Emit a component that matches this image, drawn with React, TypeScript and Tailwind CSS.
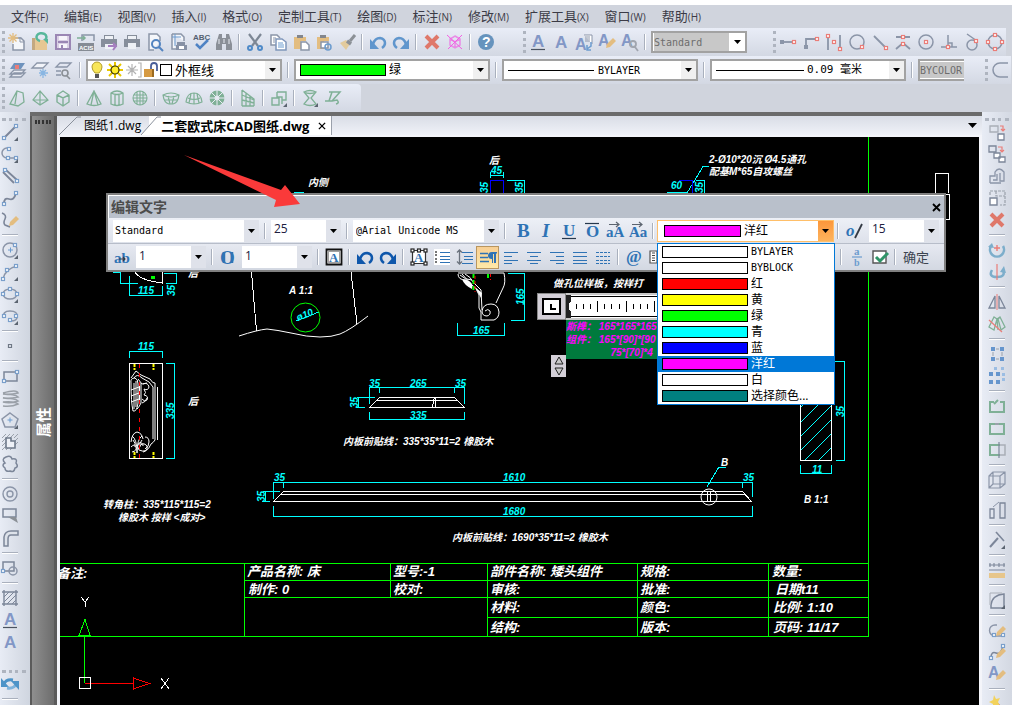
import React, { useState } from 'react';

const GREY = '#8b95a8';
const BLUE = '#6c9ccf';
const RED = '#ea7d78';
const GREEN = '#7fb096';
const SAND = '#e3bd80';
const STEEL = '#2f73b5';

// Icons are small lists of strokes, fills and letters on an 18x18 grid
const line = (d: string, color = GREY, width = 1.5, fill = 'none') => (
  <path key={d + color} d={d} stroke={color} strokeWidth={width} fill={fill} />
);
const fill = (d: string, color = GREY) => <path key={d + color} d={d} fill={color} stroke="none" />;
const letter = (s: string, x: number, y: number, size: number, color = '#8297c6', family = 'Liberation Sans', italic = false) => (
  <text key={s + x} x={x} y={y} fontSize={size} fontWeight="bold" fontStyle={italic ? 'italic' : 'normal'} fontFamily={family} fill={color} stroke="none">
    {s}
  </text>
);
const node = (x: number, y: number, color = '#7a9fcb') => (
  <rect key={`${x}-${y}`} x={x - 1.5} y={y - 1.5} width="3" height="3" stroke={color} strokeWidth="1.2" fill="#fff" />
);
const corner = fill('M17 14v4h-4z', '#5b6470');
const pencil = (color = SAND) => fill('M8 15l1-4 6-6 3 3-6 6z', color);

const icons: Record<string, React.ReactNode[]> = {
  new: [line('M6 5h7l3 3v9H5v-6', GREY, 1.5, '#f4f6fa'), line('M12 4v5h4', GREY, 1), line('M5 0v10M0 5h10M1.500 1.500l7 7M8.500 1.500l-7 7', SAND, 1.3)],
  open: [fill('M1 5h5l2 2h8v10H1z', '#e6c793'), fill('M1 5h3v12H1z', '#c3a880'), line('M9 8a5 4 0 1 1 5-1', '#57b79b', 2.500), fill('M12 6h5v5z', '#57b79b')],
  save: [line('M2 2h14v14H2z', '#9a86b4', 2, '#d9cfe4'), fill('M5 3h8v4H5zM5 11h8v4H5z', '#f6f4fa'), line('M4 9h10', '#9a86b4', 2), fill('M7 12h2v3H7z', '#9a86b4')],
  acis: [line('M5 8V2h12v6', GREY, 1.5), line('M0 5h8M6 3l2 2-2 2', GREEN, 1.5), fill('M1 10h16v8H1z', '#858b94'), letter('ACIS', 2, 17, 6, '#fff')],
  printSend: [fill('M4 2h10v4h3v8H1V6h3z', '#868e9b'), fill('M5 3h8v3H5z', '#eef1f6'), fill('M5 11h8v5H5z', '#eef1f6'), line('M8 13h7M13 10l3 3-3 4', '#a57fc0', 2)],
  print: [fill('M4 2h10v4h3v8H1V6h3z', '#868e9b'), fill('M5 3h8v3H5z', '#eef1f6'), fill('M5 10h8v6H5z', '#eef1f6')],
  preview: [line('M14 8V4l-3-3H3v16h5', GREY, 1.5, '#f4f6fa'), line('M14 11a4 4 0 1 1-8 0 4 4 0 1 1 8 0M13 14l4 4', '#5384c0', 2)],
  publish: [line('M3 1h9l3 3v4M3 1v15h4', GREY, 1.5, '#f4f6fa'), line('M3 4h9M6 1v12', BLUE, 1), fill('M8 9h8v3h2v5H7v-5h1z', '#8791a5'), fill('M10 13h5v3h-5z', '#fff')],
  spell: [letter('ABC', 1, 7, 8, '#545f70'), line('M4 11l4 4 8-8', '#4f83c4', 2.500)],
  find: [fill('M4 1h3v4h4V1h3l3 10v6h-6v-6H7v6H1v-6z', '#8a8f97'), line('M9 6v4M4 6v5M14 6v5', '#e8ebf2', 1)],
  cut: [line('M3 1l9 12M15 1L6 13', '#7d8795', 2.200), line('M6 15a2 2 0 1 1-4 0 2 2 0 1 1 4 0M16 15a2 2 0 1 1-4 0 2 2 0 1 1 4 0', '#4f8ac8', 2)],
  copy: [line('M8 12H2V2h6l3 3', GREY, 1.5, '#fff'), line('M7 6h6l4 3v8H7z', '#7f96bb', 1.5, '#fff'), line('M9 10h5M9 12h6M9 14h6', BLUE, 1), line('M4 5h3M4 7h2M4 9h2', GREY, 1)],
  paste: [fill('M2 4h12v4H9v8H2z', SAND), fill('M5 2h6v3H5z', '#83868c'), line('M9 9h5l3 3v5H9z', GREY, 1.5, '#fff')],
  pasteSpec: [fill('M2 4h12v4H9v8H2z', SAND), fill('M5 2h6v3H5z', '#83868c'), line('M6 9h7v6H6z', GREY, 1.5, '#fff'), line('M16 14a3 3 0 1 1-6 0 3 3 0 1 1 6 0', BLUE, 1.5)],
  brush: [fill('M2 10l6-3 4 4-4 6z', '#e3cb9d'), line('M9 8l4 3', '#8b9096', 3.500), line('M12 8l5-6', '#8b9096', 3)],
  undo: [line('M4 11q2-6 7-6 5 1 5 5 0 3-3 5', '#6096cd', 2.500), fill('M1 6v10h9z', '#6096cd')],
  redo: [line('M14 11q-2-6-7-6-5 1-5 5 0 3 3 5', '#6096cd', 2.500), fill('M17 6v10H8z', '#6096cd')],
  erase: [line('M3 3l12 12M15 3L3 15', '#df786a', 4)],
  purge: [line('M9 3l5 3v6l-5 3-5-3V6zM4 6l5 3 5-3M9 9v6', '#e98be6', 1.5), line('M1 2l15 14M16 2L2 16', '#f45fe4', 1)],
  help: [fill('M17 9a8 8 0 1 1-16 0 8 8 0 1 1 16 0', '#6693bd'), letter('?', 5, 14, 14, '#fff')],
  textU: [letter('A', 3, 14, 17), line('M2 16.500h14', '#4b5360', 1.2)],
  text: [letter('A', 3, 15, 17)],
  textJust: [letter('A', 0, 17, 16), line('M9 2h8v9', GREY, 1, '#fff'), line('M10 4h5M10 6h5M10 8h5', GREY, 1), line('M16 9v4l-4 3M12 12v5h4', BLUE, 1.5)],
  textEdit: [letter('A', 0, 13, 16), pencil()],
  textFind: [letter('A', 0, 13, 16), line('M15 11a3 3 0 1 1-6 0 3 3 0 1 1 6 0M14 14l3 4', '#a0a5ae', 1.8)],
  snapNear: [line('M3 9h12', GREY, 1.8), node(15, 9, RED), fill('M1 7h4v4H1z')],
  snapFrom: [line('M4 14V6h10', GREY, 1.8), node(15, 6, RED), fill('M2 12h4v4H2z')],
  snapMid: [line('M3 2v15M15 2v15', GREY, 1.8), node(3, 3, RED), node(15, 16, RED), node(9, 9, RED)],
  snapQuad: [line('M16 9a7 7 0 1 1-14 0 7 7 0 1 1 14 0', GREY, 1.5), node(14, 14, RED)],
  snapEnd: [line('M3 3l11 11', GREY, 1.8), node(15, 15, RED)],
  snapInt: [line('M2 4h14M2 16l7-6 7 6', GREY, 1.8), node(9, 4, RED), node(9, 11, RED)],
  snapCen: [line('M16 9a7 7 0 1 1-14 0 7 7 0 1 1 14 0', GREY, 1.5), node(9, 9, RED)],
  snapPerp: [line('M1 14h16M8 2v12M8 10h4v4', GREY, 1.5), node(8, 14, RED)],
  snapTan: [line('M4 1l10 7M14 12a5 5 0 1 1-10 0 5 5 0 1 1 10 0', GREY, 1.5), node(13, 8, RED)],
  snapPoly: [line('M16 9a7 7 0 1 1-14 0 7 7 0 1 1 14 0', GREY, 1.5), node(9, 2, RED), node(16, 9, RED), node(9, 16, RED), node(2, 9, RED)],
  arcHalf: [line('M17 2H9a7 7 0 0 0 0 14h8', GREY, 1.5)],
  layers: [line('M6 9h11l-4 4H2zM6 12h11l-4 4H2z', GREY, 1.3, '#e8ebf3'), fill('M6 2h11l-4 6H2z', '#6f93bd'), fill('M7 4h4v4H7z', RED)],
  layerFrz: [line('M6 2h11l-5 5H1z', GREY, 1.3, '#f2f4f9'), line('M12 8v9M8 12h9M9 9l6 6M15 9l-6 6', '#89b6e2', 1.3)],
  layerFind: [line('M6 2h11l-4 4H2zM2 10h5M2 14h5', GREY, 1.3), line('M14 12a3 3 0 1 1-6 0 3 3 0 1 1 6 0M13 15l3 3', '#8b9096', 1.6)],
  wedge: [line('M2 15L9 2l6 2 1 9-6 4zM9 2l-2 13', GREEN, 1.3)],
  pyramid: [line('M9 2L2 11l7 5 8-5zM9 2v14M2 11h15', GREEN, 1.2)],
  cube: [line('M9 2l6 4v7l-6 4-6-4V6zM3 6l6 3 6-3M9 9v8', GREEN, 1.4)],
  cone: [line('M9 2L2 15q7 3 14 0zM9 2L6 16M9 2l4 14', GREEN, 1.3)],
  cylinder: [line('M3 4q6-4 12 0v11q-6 3-12 0zM3 4q6 3 12 0M7 5v12M11 5v12', GREEN, 1.3)],
  sphere: [line('M16 9a7 7 0 1 1-14 0 7 7 0 1 1 14 0M9 2v14M2 9h14M3 6h12M3 12h12M6 3v12M12 3v12', GREEN, 1.1)],
  dish: [line('M1 6q8-4 16 0-1 8-6 9H7Q2 14 1 6zM1 6q8 4 16 0M3 11h12M6 7l2 8M12 7l-2 8', GREEN, 1.2)],
  dome: [line('M1 13Q2 4 9 4t8 9q-8 4-16 0zM3 9q6 3 12 0M9 4v11M6 5L4 14M12 5l2 9', GREEN, 1.2)],
  torus: [line('M14 9A5 5 0 1 1 4 9a5 5 0 1 1 10 0', GREEN, 5), line('M9 1v16M1 9h16M3 3l12 12M15 3L3 15', '#e8ebf3', 1)],
  mesh: [line('M3 1v16M3 1l4 3v13M7 4l4 3v10M11 7l4 3v7M3 6l12 5M3 11l12 3M3 17h12', GREEN, 1.3)],
  extrude: [line('M2 9h7v7H2zM7 3h9v8h-4M7 3v5h5v7', GREEN, 1.4), corner],
  revolve: [line('M3 3q6-3 12 0l-5 6 5 6q-6 3-12 0l5-6zM3 3q6 3 12 0', GREEN, 1.3), corner],
  sweep: [line('M5 3h11L8 12H1M8 3L5 12M8 12l5-1q3 3-1 4', GREEN, 1.5)],
  line: [line('M3 15L15 3', '#7c8699', 2), node(3, 15), node(15, 3), corner],
  polyline: [line('M8 3H6a5 5 0 0 0 0 10h9', GREY, 1.5), node(8, 4), node(7, 13), node(15, 13), corner],
  mline: [line('M5 3l11 10M2 5l11 11', '#7c8699', 1.8), node(4, 3), node(16, 14)],
  spline: [line('M3 15q0-7 5-5t7-6', '#7c8699', 1.8), node(3, 15), node(15, 4)],
  sketch: [line('M1 2q5 2 3 6t0 6l5 2', '#7c8699', 1.6), pencil()],
  circle: [line('M16 9A7 7 0 1 1 2 9a7 7 0 1 1 14 0', GREY, 1.5), line('M7 9h5M9.500 6.500v5M12 6l3-3', BLUE, 1), node(14, 4), corner],
  arc: [line('M2 16Q4 6 16 3', GREY, 1.5), node(2, 16), node(6, 7), node(15, 3), corner],
  ellipse: [line('M16 9A7 5 0 1 1 2 9a7 5 0 1 1 14 0', GREY, 1.5), node(2, 9), node(9, 4), node(16, 9), corner],
  ellArc: [line('M3 11Q1 4 9 4t7 6q0 4-6 4', GREY, 1.5), node(3, 9), node(9, 13), node(15, 9), corner],
  point: [line('M7.500 7.500h3v3h-3z', '#6f7885', 1.2)],
  rect: [line('M3 5h13v9H3z', '#7c8699', 1.5), node(3, 14), node(16, 5)],
  helix: [line('M2 4q14-4 15 0Q9 6 2 5q12 0 15 3Q9 10 2 9q12 0 15 3-8 3-15 1 12-1 15 2-6 3-15 2', '#9aa0a8', 1.6)],
  polygon: [line('M9 2l8 6-3 8H4L1 8z', GREY, 1.5), line('M6.500 9h5M9 6.500v5', BLUE, 1), corner],
  region: [line('M1 5l4-4M1 9l8-8M9 5l4-4M13 5l4-4M13 9l4-4M13 13l4-4M9 17l8-8M5 17l4-4M1 17l4-4M1 13l4-4', '#9aa1ab', 1), line('M5 5h5v3h4v7H5z', '#6f7a8b', 1.6, '#eef1f7')],
  cloud: [line('M5 2q5-2 6 2 6-1 4 4 3 4-1 5-1 5-5 3-5 1-5-3Q0 10 4 8 0 4 5 2z', '#7c8699', 1.5)],
  donut: [line('M16 9A7 7 0 1 1 2 9a7 7 0 1 1 14 0M12 9a3 3 0 1 1-6 0 3 3 0 1 1 6 0', GREY, 1.4)],
  wipeout: [line('M2 2h13v8H2z', '#7c8699', 1.5), fill('M7 10h8l2 6z', '#8b9096')],
  wall: [line('M3 17V8q1-6 7-6h7v4h-7q-3 0-3 4v7z', '#7c8699', 1.5, '#dde2ea')],
  shapes: [line('M2 3h11v9H2z', '#7c8699', 1.5), line('M16 12a4 4 0 1 1-8 0 4 4 0 1 1 8 0', GREY, 1.5), node(2, 12)],
  hatch: [line('M3 1v16M15 1v16M1 3h16M1 15h16', '#7c8699', 1.4), line('M3 8l5-5M3 13L13 3M6 15l9-9M11 15l4-4', '#7c8699', 1)],
  refresh: [line('M3 9q2-5 9-4', '#4d94c8', 3), fill('M0 3v9h8z', '#4d94c8'), line('M15 9q-2 5-9 4', '#7db3dc', 3), fill('M18 15V6h-8z', '#4d94c8')],
  copyObj: [line('M2 3h8v6H2z', '#a9aeb7', 1.3), line('M10 11h6v6h-6z', '#7c8699', 1.3, '#fff'), line('M12 3h3v5M13 6l2 2 2-2', RED, 1.2)],
  copyMul: [line('M1 1h7v6H1z', '#7c8699', 1.3), line('M6 8h6v5H6zM11 12h6v5h-6z', '#7c8699', 1.3, '#fff'), line('M10 2h4v5M12 5l2 2 2-2', RED, 1.2)],
  offset: [line('M2 16V9h5V5q4-6 9 0v9h-4V6M2 16h11M5 13h4V7', GREY, 1.3)],
  scale: [<path key="s" d="M2 6V2h15v14h-5M8 2v5h9" stroke="#9aa1ab" strokeWidth="1.200" strokeDasharray="3 1" />, line('M2 9h7v7H2z', '#7c8699', 1.4, '#fff')],
  rotate: [line('M3 5a7 7 0 1 0 12 0', '#7daecb', 2.500), line('M6 7h6M9 4v6', RED, 1.4), fill('M0 6l4-4 2 5z', '#7daecb')],
  rotate3d: [line('M4 7q-4 7 5 7t6-7', '#7daecb', 2.500), line('M9 1v16', RED, 1.2), fill('M12 9l4-6 2 7z', '#7daecb')],
  mirror: [line('M7 3v12H1zM11 3v12h6z', '#7c8699', 1.3), line('M9 1v16', RED, 1)],
  mirror3d: [line('M6 2L1 12l5 3 3-11zM9 4l1 11M12 2l5 10-4 3-3-11zM6 2l3 2 3-2', GREEN, 1.3), line('M1 5l13 12', RED, 1.2)],
  array: [fill('M3 2h4v4H3zM12 2h4v4h-4zM3 12h4v4H3zM12 12h4v4h-4z', '#6595cd'), line('M8 4h3M8 14h3M5 7v4M14 7v4', '#9aa1ab', 1)],
  array3d: [fill('M1 5h4v4H1zM8 5h4v4H8zM1 13h4v4H1zM8 13h4v4H8z', '#6595cd'), fill('M6 0h3v3H6zM13 0h3v3h-3zM14 6h3v3h-3zM14 11h3v3h-3z', '#9bbde3')],
  trim: [line('M6 5H2v10h14V5h-4M6 7l4-4', GREEN, 2)],
  extend: [line('M2 5h14v10H2z', GREEN, 2), line('M7 5h4', '#9aa1ab', 2)],
  breakAt: [line('M12 4H2v10h10', GREEN, 2), line('M12 4h5v10h-5', '#a9aeb7', 1.5), line('M11 1v16', '#7c8699', 1.2)],
  box: [line('M1 5h11v12H1zM5 1h12v12H5zM1 5l4-4M12 5l5-4M12 17l5-4M1 17l4-4', GREY, 1.2)],
  lengthen: [line('M2 8h4v9H2zM12 2h5v15h-5z', '#7c8699', 1.3), line('M5 6l6-5', GREY, 1)],
  explode: [line('M2 16L10 7', '#7c8699', 2), line('M8 1l8 9', '#7c8699', 1.6), corner],
  measure: [line('M1 4h16M2 2v4M6 2v4M11 2v4M16 2v4M1 9h16', '#7c8699', 1.1), fill('M1 12h16v5H1z', '#e7c68b')],
  fillet: [line('M3 17V14Q4 4 16 3v14z', '#7c8699', 1.5), line('M2 2h12M2 2v12', '#a9aeb7', 1), corner],
  editPl: [line('M9 4H7a5 5 0 0 0 0 11h9', GREY, 1.4), node(6, 14), node(15, 14), pencil(SAND)],
  editSpl: [line('M3 15q0-7 5-5t7-7', '#7c8699', 1.5), node(3, 15), node(15, 3), pencil(SAND)],
  wand: [line('M7 7l9 9', '#c9787f', 3), fill('M6 0l2 4 4-1-2 4 2 4-4-1-3 3V9L1 7l4-2z', '#f2d25c')],
  bold: [letter('B', 3, 15, 19, STEEL, 'Liberation Serif')],
  italic: [letter('I', 5, 15, 19, STEEL, 'Liberation Serif', true)],
  underline: [letter('U', 3, 14, 17, STEEL, 'Liberation Serif'), line('M2 16.500h14', '#26384c', 1.2)],
  overline: [letter('O', 3, 15, 17, STEEL, 'Liberation Serif'), line('M2 1.500h14', '#26384c', 1.2)],
  upper: [letter('aA', 0, 15, 15, STEEL, 'Liberation Serif'), line('M3 2.500h10M10 0l3 2.500-3 2.500', '#5c646f', 1.2)],
  lower: [letter('Aa', 0, 15, 15, STEEL, 'Liberation Serif'), line('M3 2.500h10M10 0l3 2.500-3 2.500', '#5c646f', 1.2)],
  oblique: [letter('o', 1, 14, 17, STEEL, 'Liberation Serif', true), line('M10 16L17 2', '#333a44', 1.8)],
  tracking: [letter('ab', 1, 15, 15, STEEL, 'Liberation Serif'), line('M6 11h6M10 9l2 2-2 2', '#333a44', 1.1)],
  widthF: [letter('O', 1, 16, 19, STEEL, 'Liberation Serif'), line('M5 4v11M13 4v11', STEEL, 2.500)],
  frame: [line('M1.500 1.500h15v15h-15z', '#111', 1.8, '#fff'), letter('A', 4, 14, 13, STEEL, 'Liberation Serif'), <rect key="f" x="3.500" y="3.500" width="11" height="11" stroke="#444" strokeWidth="1" strokeDasharray="1 1" />],
  undoD: [line('M4 11q2-6 7-6 5 1 5 5 0 3-3 5', '#0f57ab', 2.500), fill('M1 6v10h9z', '#0f57ab')],
  redoD: [line('M14 11q-2-6-7-6-5 1-5 5 0 3 3 5', '#0f57ab', 2.500), fill('M17 6v10H8z', '#0f57ab')],
  fieldA: [line('M2.500 2.500h13v13h-13z', '#333', 1.2, '#fff'), letter('A', 4, 14, 13, STEEL, 'Liberation Serif'), node(2.500, 2.500, '#222'), node(9, 2.500, '#222'), node(15.500, 2.500, '#222'), node(2.500, 15.500, '#222'), node(15.500, 15.500, '#222')],
  bullets: [fill('M1 1h16v16H1z', '#fff'), line('M7 4.500h10M7 8.500h10M7 11.500h10M7 14.500h10', STEEL, 1.2), fill('M2 3h2v2H2zM2 6h2v2H2zM2 10h2v2H2zM2 13h2v2H2z', '#777')],
  spacing: [line('M6 4.500h11M8 8.500h9M8 11.500h9M6 15.500h11', STEEL, 1.2), line('M3.500 2v14M1 4.500L3.500 2 6 4.500M1 13.500L3.500 16 6 13.500', '#6b737e', 1.3)],
  para: [line('M1 5.500h8M1 9.500h8M1 13.500h9', STEEL, 1.6), fill('M9 8q0-4 4-4h5v1.500h-1V15h-2V6h-1v9h-1v-4q-4 0-4-3z', STEEL)],
  alignL: [line('M2 4.500h14M2 8.500h8M2 12.500h14M2 15.500h8', STEEL, 1.2)],
  alignC: [line('M2 4.500h14M5 8.500h8M2 12.500h14M5 15.500h8', STEEL, 1.2)],
  alignR: [line('M2 4.500h14M8 8.500h8M2 12.500h14M8 15.500h8', STEEL, 1.2)],
  justify: [line('M2 4.500h14M2 8.500h14M2 12.500h14M2 15.500h14', STEEL, 1.2)],
  distribute: [<path key="d" d="M2 4.500h14M2 8.500h14M2 12.500h14M2 15.500h14" stroke={STEEL} strokeWidth="1.2" strokeDasharray="3 1" />],
  at: [letter('@', 1, 14, 17, STEEL, 'Liberation Serif')],
  columns: [line('M2 3h7v12H2z', '#555', 1.2, '#fff'), line('M4 5h3M4 7.500h3M4 10h3M4 12.500h3', '#444', 1)],
  fraction: [letter('a', 6, 7, 11, BLUE, 'Liberation Serif'), letter('b', 6, 18, 10, BLUE, 'Liberation Serif'), line('M4 9h10', BLUE, 1.2)],
  check: [line('M2 3h13v12H2z', '#555', 1.4, '#fff'), line('M5 9l4 4 8-8', '#2f9468', 3)],
  bulb: [line('M4 6a5 5 0 1 1 10 0q0 3-3 6H7Q4 9 4 6z', '#b29d2c', 1, '#f8e658'), fill('M7 13h4v4H7z', '#555')],
  sun: [line('M9 1v16M1 9h16M3 3l12 12M15 3L3 15', '#e9c800', 2), line('M13 9a4 4 0 1 1-8 0 4 4 0 1 1 8 0', '#3a3200', 1.2, '#ffee30')],
  freeze: [line('M8 3v12M2 9h12M4 5l8 8M12 5l-8 8M14 2h3v14h-3', '#b3b3b3', 1.2)],
  lock: [fill('M2 8h8v8H2z', '#d69a42'), line('M9 8V5q0-3 3-3t3 3v5', '#4a5f99', 1.8), fill('M10 8h2v8h-2z', '#9b6a20')],
};

const labels: Record<string, string> = { bold: '粗体', italic: '斜体', underline: '下划线', overline: '上划线', undo: '放弃', redo: '重做', save: '保存', print: '打印' };

const Icon: React.FC<{ name: string }> = ({ name }) => (
  <svg viewBox="0 0 18 18" className="h-[18px] w-[18px] shrink-0 overflow-visible" fill="none" aria-hidden="true">
    {icons[name]}
  </svg>
);

const ToolButton: React.FC<{ name: string; vertical?: boolean; pressed?: boolean }> = ({ name, vertical, pressed }) => (
  <button
    type="button"
    aria-label={labels[name] ?? name}
    className={`flex shrink-0 items-center justify-center ${vertical ? 'h-[22px] w-full' : 'h-[23px] w-[23px]'} ${
      pressed ? 'border border-[#b9965f] bg-gradient-to-b from-[#f8cf93] to-[#ffe9a8]' : ''
    }`}
  >
    <Icon name={name} />
  </button>
);

const Divider: React.FC<{ wide?: boolean }> = ({ wide }) => (
  <span className={`flex h-4 shrink-0 justify-center ${wide ? 'w-3' : 'w-2'}`}>
    <span className="w-[2px] border-l border-[#a9b0bd] bg-white" />
  </span>
);

// '|' in a tool list stands for a divider
const Tools: React.FC<{ list: string }> = ({ list }) => (
  <>
    {list.split(' ').map((name, i) => (name === '|' ? <Divider key={i} /> : <ToolButton key={i} name={name} />))}
  </>
);

const SideTools: React.FC<{ list: string }> = ({ list }) => (
  <>
    {list.split(' ').map((name, i) =>
      name === '|' ? (
        <span key={i} className="flex h-2 w-full shrink-0 items-center justify-center">
          <span className="h-[2px] w-4 border-t border-[#a9b0bd] bg-white" />
        </span>
      ) : (
        <ToolButton key={i} name={name} vertical />
      )
    )}
  </>
);

const Grip: React.FC = () => <span className="h-[22px] w-[3px] shrink-0 border-l-[3px] border-dotted border-[#aeb4bf]" />;
const SideGrip: React.FC = () => <span className="block h-[3px] w-6 shrink-0 border-t-[3px] border-dotted border-[#aeb4bf]" />;

const Caret: React.FC = () => (
  <svg viewBox="0 0 7 4" className="h-1 w-[7px]" aria-hidden="true">
    <path d="M0 0h7L3.500 4z" fill="#000" />
  </svg>
);

type ComboProps = {
  label: string;
  value: string;
  className: string;
  prefix?: React.ReactNode;
  look?: 'bar' | 'flat' | 'hot' | 'off';
  textClass?: string;
};

const looks = {
  bar: 'border-2 border-[#a2a2a2] bg-white text-black',
  off: 'border-2 border-[#a2a2a2] bg-white text-[#6d6d6d]',
  flat: 'bg-white text-black',
  hot: 'border border-[#ffbf69] bg-white text-black',
};

const arrows = {
  bar: 'bg-[#f0f0f0]',
  off: 'bg-white',
  flat: 'bg-[#dfe2ea]',
  hot: 'bg-gradient-to-b from-[#fc973b] to-[#fdb35c]',
};

const mono = "font-['DejaVu_Sans_Mono','Noto_Sans_CJK_SC',monospace] text-[10px]";

const Combo: React.FC<ComboProps> = ({ label, value, className, prefix, look = 'bar', textClass = mono }) => (
  <span className={`relative flex h-[22px] shrink-0 items-center ${looks[look]} ${className}`}>
    {prefix}
    <select
      aria-label={label}
      defaultValue={value}
      className={`h-full min-w-0 flex-1 appearance-none outline-none ${look === 'off' ? 'm-px h-4 bg-[#c8c8c8]' : 'bg-transparent'} ${textClass}`}
    >
      <option>{value}</option>
    </select>
    <span className={`pointer-events-none flex h-full w-[15px] shrink-0 items-center justify-center ${arrows[look]}`}>
      <Caret />
    </span>
  </span>
);

const NumberCombo: React.FC<{ label: string; value: string }> = ({ label, value }) => (
  <span className="flex h-[22px] w-[70px] shrink-0 bg-white">
    <input aria-label={label} defaultValue={value} className="h-[18px] min-w-0 flex-1 pl-[3px] font-['Open_Sans',sans-serif] text-xs text-[#202040] outline-none" />
    <button type="button" aria-label={`${label} 列表`} className="flex w-[15px] items-center justify-center bg-[#dfe2ea]">
      <Caret />
    </button>
  </span>
);

const Swatch: React.FC<{ className: string }> = ({ className }) => <span className={`h-3 w-[86px] shrink-0 border border-black ${className}`} />;

const menus = [
  ['文件', 'F'], ['编辑', 'E'], ['视图', 'V'], ['插入', 'I'], ['格式', 'O'], ['定制工具', 'T'],
  ['绘图', 'D'], ['标注', 'N'], ['修改', 'M'], ['扩展工具', 'X'], ['窗口', 'W'], ['帮助', 'H'],
];

const MenuBar: React.FC = () => (
  <nav className="flex h-[28px] shrink-0 items-center border-t-[5px] border-white pl-[3px] text-[13px] text-[#3b3b46]">
    {menus.map(([name, key]) => (
      <button key={key} type="button" className="shrink-0 px-2 leading-5">
        {name}
        <span className="text-[10px]">({key})</span>
      </button>
    ))}
  </nav>
);

const barClass = 'flex h-7 shrink-0 items-center bg-gradient-to-b from-[#e9edf7] to-[#d3d8e3]';

const Toolbars: React.FC = () => (
  <header className="shrink-0">
    <div className="flex">
      <div className={`${barClass} pr-[18px] pl-[2px]`}>
        <Grip />
        <Tools list="new open save acis printSend print preview publish spell find | cut copy paste pasteSpec brush | undo redo | erase purge | help" />
      </div>
      <div className={`${barClass} pr-[18px] pl-2`}>
        <Grip />
        <Tools list="textU text textJust textEdit textFind |" />
        <Combo label="文字样式" value="Standard" look="off" className="ml-[2px] w-24" />
      </div>
      <div className={`${barClass} pl-2`}>
        <Grip />
        <Tools list="snapNear snapFrom snapMid snapQuad snapEnd snapInt snapCen snapPerp snapTan snapPoly" />
      </div>
    </div>
    <div className="flex">
      <div className={`${barClass} pr-4 pl-[2px]`}>
        <Grip />
        <Tools list="layers layerFrz layerFind" />
        <Divider wide />
        <Combo
          label="图层"
          value="外框线"
          className="w-[196px]"
          textClass="text-[13px] pl-[3px]"
          prefix={
            <span className="flex items-center">
              <Icon name="bulb" />
              <Icon name="sun" />
              <Icon name="freeze" />
              <Icon name="lock" />
              <span className="h-3 w-3 border border-black" />
            </span>
          }
        />
        <Divider wide />
        <Combo label="颜色" value="绿" className="w-[196px] pl-1" textClass="text-xs pl-[3px]" prefix={<Swatch className="bg-[#00ff00]" />} />
        <Divider wide />
        <Combo label="线型" value="BYLAYER" className="w-[196px] pl-1" textClass={`${mono} pl-1`} prefix={<span className="h-px w-[86px] bg-black" />} />
        <Divider wide />
        <Combo label="线宽" value="0.09 毫米" className="w-[196px] pl-1" textClass={`${mono} pl-[3px] text-[11px]`} prefix={<span className="h-px w-[88px] bg-black" />} />
        <Divider wide />
        <span className="flex h-[22px] w-[46px] items-center border-y-2 border-l-2 border-[#a2a2a2] bg-white">
          <input aria-label="打印样式" disabled defaultValue="BYCOLOR" className={`mt-px mb-px h-4 w-full bg-[#c8c8c8] text-[#6d6d6d] ${mono}`} />
        </span>
      </div>
      <div className={`${barClass} pl-[5px]`}>
        <Grip />
        <Tools list="arcHalf" />
      </div>
    </div>
    <div className={`${barClass} w-[361px] rounded-r pl-[2px]`}>
      <Grip />
      <Tools list="wedge pyramid cube | cone cylinder sphere | dish dome torus | mesh | extrude | revolve sweep" />
    </div>
  </header>
);

type Label = { x: number; y: number; text: string; turn?: number };

const dimensions: Label[] = [
  { x: 491, y: 174, text: '45' },
  { x: 488, y: 193, text: '35', turn: -90 },
  { x: 523, y: 193, text: '35', turn: -90 },
  { x: 671, y: 189, text: '60' },
  { x: 703, y: 193, text: '35', turn: -90 },
  { x: 138, y: 294, text: '115' },
  { x: 175, y: 296, text: '35', turn: -90 },
  { x: 298, y: 321, text: 'ø10', turn: -22 },
  { x: 524, y: 305, text: '165', turn: -90 },
  { x: 473, y: 334, text: '165' },
  { x: 138, y: 350, text: '115' },
  { x: 174, y: 419, text: '335', turn: -90 },
  { x: 369, y: 387, text: '35' },
  { x: 410, y: 387, text: '265' },
  { x: 455, y: 387, text: '35' },
  { x: 358, y: 408, text: '35', turn: -90 },
  { x: 410, y: 419, text: '335' },
  { x: 274, y: 481, text: '35' },
  { x: 503, y: 481, text: '1610' },
  { x: 743, y: 481, text: '35' },
  { x: 265, y: 502, text: '35', turn: -90 },
  { x: 503, y: 515, text: '1680' },
  { x: 844, y: 417, text: '35', turn: -90 },
  { x: 812, y: 473, text: '11' },
];

const notes: Label[] = [
  { x: 489, y: 164, text: '后' },
  { x: 308, y: 186, text: '内侧' },
  { x: 709, y: 163, text: '2-Ø10*20沉 Ø4.5通孔' },
  { x: 709, y: 175, text: '配基M*65自攻螺丝' },
  { x: 188, y: 277, text: '后' },
  { x: 188, y: 405, text: '后' },
  { x: 289, y: 294, text: 'A 1:1' },
  { x: 553, y: 287, text: '做孔位样板，按样打' },
  { x: 343, y: 445, text: '内板前贴线：335*35*11=2 橡胶木' },
  { x: 452, y: 541, text: '内板前贴线：1690*35*11=2 橡胶木' },
  { x: 103, y: 508, text: '转角柱：335*115*115=2' },
  { x: 118, y: 521, text: '橡胶木 按样 <成对>' },
  { x: 721, y: 466, text: 'B' },
  { x: 804, y: 503, text: 'B 1:1' },
];

const titleBlock: Label[] = [
  { x: 57, y: 578, text: '备注:' },
  { x: 247, y: 576, text: '产品名称: 床' },
  { x: 393, y: 576, text: '型号:-1' },
  { x: 490, y: 576, text: '部件名称: 矮头组件' },
  { x: 640, y: 576, text: '规格:' },
  { x: 772, y: 576, text: '数量:' },
  { x: 248, y: 594, text: '制作: 0' },
  { x: 393, y: 594, text: '校对:' },
  { x: 490, y: 594, text: '审核:' },
  { x: 640, y: 594, text: '批准:' },
  { x: 775, y: 594, text: '日期t11' },
  { x: 490, y: 612, text: '材料:' },
  { x: 640, y: 612, text: '颜色:' },
  { x: 773, y: 612, text: '比例: 1:10' },
  { x: 490, y: 632, text: '结构:' },
  { x: 640, y: 632, text: '版本:' },
  { x: 773, y: 632, text: '页码: 11/17' },
];

const Labels: React.FC<{ items: Label[]; size: number; color: string }> = ({ items, size, color }) => (
  <g fill={color} fontSize={size} fontWeight="bold" fontStyle="italic" fontFamily="'Liberation Sans', 'Noto Sans CJK SC', sans-serif">
    {items.map((l, i) => (
      <text key={i} x={l.x} y={l.y} transform={l.turn ? `rotate(${l.turn} ${l.x} ${l.y})` : undefined}>
        {l.text}
      </text>
    ))}
  </g>
);

const Drawing: React.FC = () => (
  <svg viewBox="60 137 919 568" width="919" height="568" fill="none" className="block">
    <g shapeRendering="crispEdges" strokeWidth="1">
      {/* Sheet frame and title block */}
      <path
        stroke="#00ff00"
        d="M868.500 137V636.500H57M57 563.500H868M244.500 563V636M390.500 563V598M487.500 563V636M637.500 563V636M768.500 563V636M244 580.500H868M244 597.500H487M487 597.500H868M487 617.500H868"
      />
      {/* Dimension lines */}
      <path
        stroke="#00ffff"
        d="M294 192.500h10M490.500 172v6M503.500 172v6M490 175.500h13M507 180.500h17.500V193M667 192.500h20M709 166.500h-6L687 193M696 180.500h8V193
        M113 272.500h7V283.500h18M129.500 276V295.500h33V286M164 273.500h12V283.500h-10M296 321l23-9
        M508 273.500h16.500V320.500h-14M457.500 323V335.500h47V323
        M129.500 358V351.500h33V358M166 363.500h9M174.500 363V458.500h-9
        M369.500 404V387.500h95V404M379.500 387v6M454.500 387v6M375 397.500h-18M358.500 397v10M356 407.500h9M369.500 412v7.500h95V412
        M273.500 499V482.500h479V497M283.500 482v6M742.500 482v6M280 491.500h-17M265.500 491v10M262 501.500h8M273.500 506V516.500h479V506
        M707 487l12-20h7M835 361.500h9.500V460.500h-9M800.500 465V473.500h31V465"
      />
      <path stroke="#00ffff" d="M801 407l3-3M801 422l18-18M801 436l30-30M801 450l30-30M805 460l26-26M819 460l12-12" />
      <path stroke="#0000ff" d="M490.500 193V180.500h13V193M679 180.500h13V193" />
      {/* Profiles */}
      <path
        stroke="#ffffff"
        d="M379.500 397.500h75l10 10h-95zM376 400.500h81M432.500 407l2-10M435.500 397v10
        M283.500 491.500H742.500L751.500 501.500H273.500zM280 494.500H745
        M800.500 404V460.500h31V404M935.500 193V173.500h13V193M945 194.500h4.500V219.500H945M129.500 363.500h33v95h-33z
        M135 272q4 8 27 11V272M251.500 272L256.500 331M351 272l6 52"
      />
    </g>
    <path stroke="#ffffff" d="M239 336q18-6 28-7 10 1 24 4 16 4 29 4 12 0 20-3 10-4 28-18" />
    <circle cx="305.500" cy="317.500" r="14.500" stroke="#00ff00" />
    <circle cx="709" cy="497" r="8" stroke="#ffffff" />
    <path stroke="#ffffff" d="M707.500 491v11M710.500 491v11" />
    {/* Carved leg */}
    <g stroke="#ffffff">
      <path d="M458 273h46q2 10-1 15l-7 15M458 274q0 6 8 6l5 4q6 4 8 11v13l2 4v8h13q5-2 5-8-1-8-8-8-8 0-9 7 0 5 5 5 4-1 3-5-2-3-5 0M465 274q6 3 8 8l8 8 1 20M460 275q5 5 12 5M462 274l9 10" />
    </g>
    <path fill="#ffffff" d="M466 280q8 2 6 9-8-4-10-10zM475 287l7 6-1 5z" />
    <path stroke="#00ff00" strokeDasharray="4 2" strokeWidth="2" d="M473.500 274v16M488 274v6" />
    <path stroke="#ff0000" strokeDasharray="3 2" d="M490.500 274v6M475 276v16" />
    <path fill="#00ff00" d="M151 276h4v3h-4z" />
    {/* Corner post ornament */}
    <g stroke="#ffffff" strokeWidth="1">
      <path d="M131 378l5-7 5 4 9 4q3 5 5 4v57q-2 3-4 4-4 10-12 6-3-4 0-7 4-1 4 3M134 378q3-5 8 0l7 4 4 5v52M157.500 387v53" />
      <path d="M131 383q-1-5 4-5 3 1 3 6v19q-1 9-5 8-2-9-2-28zM134 383v26M136 381v26M141 383v20q-3 6-4 6M139.500 385v17M143 384q5-2 6 3-1 4-5 2 3 4 0 6M144 395q5 1 3 5-3 2-5-1M142 403q4-1 5-5M131 390l8-3M131 396l8-3M131 402l8-3M138 379l4 5 5-1" />
      <path d="M131 442q1-9 6-10 5 1 6 7M132 436q5 3 5 17 0-14 5-17M131 447q4-4 5 0t-4 5M139 447q4-6 8-1 1 5-4 6M133 440q3 3 2 7M142 440q-3 3-2 7M145 437q4 0 4 5t-4 7" />
    </g>
    <path stroke="#ffff00" strokeDasharray="3 1" strokeWidth="2" d="M134.500 364v6M153.500 364v6M134.500 452v6M153.500 452v6" />
    <path stroke="#ff0000" strokeDasharray="4 5" d="M139.500 364v94" />
    {/* Coordinate axes */}
    <g shapeRendering="crispEdges">
      <path stroke="#00ff00" d="M84.500 683V635M79 635.500h11l-5-16z" />
      <path stroke="#ff0000" d="M85 683.500h48M133.500 678v11l16-5.500z" />
      <path stroke="#ffffff" d="M79.500 677.500h11v11h-11zM81 597l4 5v5M89 597l-4 5M161 678l8 11M169 678l-8 11" />
    </g>
    <Labels items={dimensions} size={10} color="#00ffff" />
    <Labels items={notes} size={10} color="#ffffff" />
    <Labels items={titleBlock} size={13} color="#ffffff" />
  </svg>
);

// In-place text editor that sits on the drawing under the format dialog
const TextEditor: React.FC = () => (
  <div className="absolute top-[156px] left-[477px] w-[124px]">
    <div className="flex">
      <button type="button" aria-label="制表位" className="flex h-[27px] w-[29px] items-center justify-center border border-[#8a8a8a] bg-[#d4d0d8]">
        <svg viewBox="0 0 19 17" className="h-[17px] w-[19px]" fill="none">
          <path d="M1 1h17v15H1z" fill="#fff" stroke="#000" strokeWidth="2" />
          <path d="M9 6v5h5" stroke="#000" strokeWidth="2" />
        </svg>
      </button>
      <div className="h-[27px] flex-1 border-y-2 border-[#c8c8c8] bg-white">
        <svg viewBox="0 0 95 23" className="h-[23px] w-[95px]" shapeRendering="crispEdges">
          <path d="M0 0h5v6L3 9v5l2 3v6H0z" fill="#222" />
          <path d="M5 1.500h90M5 21.500h90" stroke="#000" />
          <path d="M10.500 9v5M17.500 9v5M24.500 9v5M31.500 6v11M38.500 9v5M45.500 9v5M53.500 9v5M60.500 6v11M67.500 9v5M74.500 9v5M81.500 9v5M88.500 6v11" stroke="#000" />
        </svg>
      </div>
    </div>
    <textarea
      aria-label="多行文字"
      wrap="off"
      readOnly
      value={'斯榫： 165*165*165\n组件： 165*[90]*[90\n                75*[70]*4'}
      className="ml-[29px] block h-[39px] w-[95px] resize-none overflow-hidden bg-[#007a3d] font-['Liberation_Sans','Noto_Sans_CJK_SC',sans-serif] text-[10px] leading-[13px] font-bold text-[#ff00ff] italic outline-none"
    />
    <div className="-mt-1 ml-[14px] flex w-[15px] flex-col bg-[#d4d0d8]">
      {['M3 9l4-7 4 7z', 'M3 2l4 7 4-7z'].map((d, i) => (
        <button key={d} type="button" aria-label={i ? '缩短' : '加长'} className="flex h-[11px] justify-center">
          <svg viewBox="0 0 14 11" className="h-[11px] w-[14px]">
            <path d={d} fill="#c8c8c8" stroke="#222" />
          </svg>
        </button>
      ))}
    </div>
  </div>
);

const colors = [
  { name: 'BYLAYER', fill: 'bg-white' },
  { name: 'BYBLOCK', fill: 'bg-white' },
  { name: '红', fill: 'bg-[#ff0000]' },
  { name: '黄', fill: 'bg-[#ffff00]' },
  { name: '绿', fill: 'bg-[#00ff00]' },
  { name: '青', fill: 'bg-[#00ffff]' },
  { name: '蓝', fill: 'bg-[#0000ff]' },
  { name: '洋红', fill: 'bg-[#ff00ff]' },
  { name: '白', fill: 'bg-white' },
  { name: '选择颜色...', fill: 'bg-[#008080]' },
];

const ColorList: React.FC = () => {
  const [selected, setSelected] = useState('洋红');

  return (
    <ul className="absolute top-[23px] left-0 z-10 w-[178px] border border-[#0078d7] bg-white">
      {colors.map(color => (
        <li key={color.name}>
          <button
            type="button"
            onClick={() => setSelected(color.name)}
            className={`flex h-4 w-full items-center gap-[3px] pl-1 text-left ${selected === color.name ? 'bg-[#0078d7] text-white' : 'text-black'}`}
          >
            <Swatch className={color.fill} />
            <span className={color.name.startsWith('BY') ? mono : 'text-xs leading-4'}>{color.name}</span>
          </button>
        </li>
      ))}
    </ul>
  );
};

const TextDialog: React.FC = () => (
  <section aria-label="编辑文字" className="absolute top-14 left-[46px] w-[840px] border-2 border-[#808080] bg-[#dfe3eb]">
    <div className="flex h-[23px] items-center justify-between border-t border-l border-white bg-[#b9c0cb] pl-[2px]">
      <h2 className="text-sm leading-5 font-bold text-[#4c4c4c]">编辑文字</h2>
      <button type="button" aria-label="关闭" className="flex h-4 w-4 items-center justify-center">
        <svg viewBox="0 0 9 9" className="h-[9px] w-[9px]">
          <path d="M1 1l7 7M8 1L1 8" stroke="#000" strokeWidth="1.800" />
        </svg>
      </button>
    </div>
    <div className="flex h-[26px] items-center border-b border-[#b7bdc9] bg-gradient-to-b from-[#edf0f7] to-[#dde1ea] pl-[5px]">
      <Combo label="样式" value="Standard" look="flat" className="w-[146px] pl-[2px]" />
      <Divider wide />
      <NumberCombo label="高度" value="25" />
      <Divider wide />
      <Combo label="字体" value="@Arial Unicode MS" look="flat" className="w-[146px] pl-[3px]" />
      <Divider wide />
      <Tools list="bold italic underline overline upper lower |" />
      <div className="relative">
        <Combo label="文字颜色" value="洋红" look="hot" className="w-[177px] pl-[6px]" textClass="text-xs pl-[3px]" prefix={<span className="h-3 w-[77px] border border-black bg-[#ff00ff]" />} />
        <ColorList />
      </div>
      <Divider />
      <Tools list="oblique" />
      <span className="w-1" />
      <NumberCombo label="倾斜角度" value="15" />
    </div>
    <div className="flex h-[26px] items-center bg-gradient-to-b from-[#e6e9f1] to-[#d3d8e2] pl-[2px]">
      <Tools list="tracking" />
      <span className="mr-[2px] ml-[3px]">
        <NumberCombo label="字间距" value="1" />
      </span>
      <Tools list="| widthF" />
      <span className="mr-[2px] ml-[3px]">
        <NumberCombo label="宽度因子" value="1" />
      </span>
      <Tools list="| frame | undoD redoD | fieldA bullets spacing" />
      <ToolButton name="para" pressed />
      <Tools list="alignL alignC alignR justify distribute | at columns" />
      <span className="w-[169px] shrink-0" />
      <Tools list="| fraction check |" />
      <button type="button" className="px-1 text-[13px] leading-5 text-[#3c4450]">
        确定
      </button>
    </div>
  </section>
);

const Tabs: React.FC = () => (
  <div className="flex h-[19px] shrink-0 items-center justify-between bg-gradient-to-b from-[#d9dde6] to-[#f0f2f8] pr-1 text-[13px] leading-4 text-black">
    <div className="flex h-full">
      <button type="button" className="relative flex h-full items-center pr-2 pl-[27px] text-xs">
        <svg viewBox="0 0 24 19" className="absolute top-0 left-0 h-[19px] w-6" fill="none">
          <path d="M2 19L20 1h4" stroke="#8a909b" />
        </svg>
        图纸1.dwg
      </button>
      <div className="relative flex h-full items-center border-r border-[#9aa0ab] bg-white pl-3">
        <svg viewBox="0 0 20 19" className="absolute top-0 -left-2 h-[19px] w-5" fill="none">
          <path d="M0 19L16 1h4v18z" fill="#fff" />
          <path d="M0 19L16 1h4" stroke="#8a909b" />
        </svg>
        <button type="button" className="relative font-bold">二套欧式床CAD图纸.dwg</button>
        <button type="button" aria-label="关闭标签" className="mr-1 ml-2 p-px">
          <svg viewBox="0 0 9 9" className="h-2 w-2">
            <path d="M1 1l7 7M8 1L1 8" stroke="#000" strokeWidth="1.500" />
          </svg>
        </button>
      </div>
    </div>
    <button type="button" aria-label="标签列表" className="p-px">
      <svg viewBox="0 0 9 5" className="h-[5px] w-[9px]">
        <path d="M0 0h9L4.500 5z" fill="#000" />
      </svg>
    </button>
  </div>
);

const App: React.FC = () => {
  return (
    <div className="flex h-screen flex-col overflow-hidden bg-[#d0d4dd] font-['Open_Sans','Noto_Sans_CJK_SC',sans-serif]">
      <MenuBar />
      <Toolbars />
      <div className="flex min-h-0 flex-1">
        <aside className="flex w-[30px] shrink-0 flex-col bg-gradient-to-r from-[#e8ecf5] to-[#cfd5df] pt-[6px]">
          <span className="pl-[2px]">
            <SideGrip />
          </span>
          <div className="flex w-5 flex-col">
            <SideTools list="line polyline mline spline sketch | circle arc ellipse ellArc | point | rect helix polygon region cloud | donut wipeout wall | shapes | hatch textU text" />
          </div>
          <span className="pt-[17px] pl-[2px]">
            <SideGrip />
          </span>
          <div className="flex w-5 flex-col">
            <SideTools list="refresh |" />
          </div>
        </aside>

        {/* Docked document area */}
        <div className="flex min-w-0 flex-1 border-t-4 border-[#6b6b6b]">
          <aside className="flex w-[27px] shrink-0 flex-col items-center border-r-[3px] border-l-2 border-[#5a5a5a] bg-gradient-to-r from-[#8f8f8f] to-[#6d6d6d] pt-1">
            <span className="h-1 w-4 border-y-2 border-dotted border-[#333]" />
            <span className="flex flex-1 items-center pt-4">
              <span className="-rotate-90 text-[15px] font-bold whitespace-nowrap text-white">属性</span>
            </span>
          </aside>
          <main className="flex min-w-0 flex-1 flex-col">
            <Tabs />
            <div className="relative min-h-0 flex-1 overflow-hidden border-t-2 border-r-[3px] border-l-[3px] border-[#f4f5fa] bg-black">
              <Drawing />
              <TextEditor />
              <TextDialog />
              <svg viewBox="0 0 118 54" className="pointer-events-none absolute top-[17px] left-[123px] h-[54px] w-[118px]">
                <path d="M1 1l97 35 4-5 15 19-26 3 2-7z" fill="#fa3a3a" />
              </svg>
            </div>
          </main>
        </div>

        <aside className="flex w-[30px] shrink-0 flex-col items-center bg-gradient-to-r from-[#e8ecf5] to-[#d3d8e2] pt-[6px]">
          <SideGrip />
          <SideTools list="copyObj copyMul offset scale erase | rotate rotate3d | mirror mirror3d | array array3d | trim extend breakAt | box | lengthen | explode | measure | fillet | editPl editSpl textEdit | wand" />
        </aside>
      </div>
    </div>
  );
};

export default App;
